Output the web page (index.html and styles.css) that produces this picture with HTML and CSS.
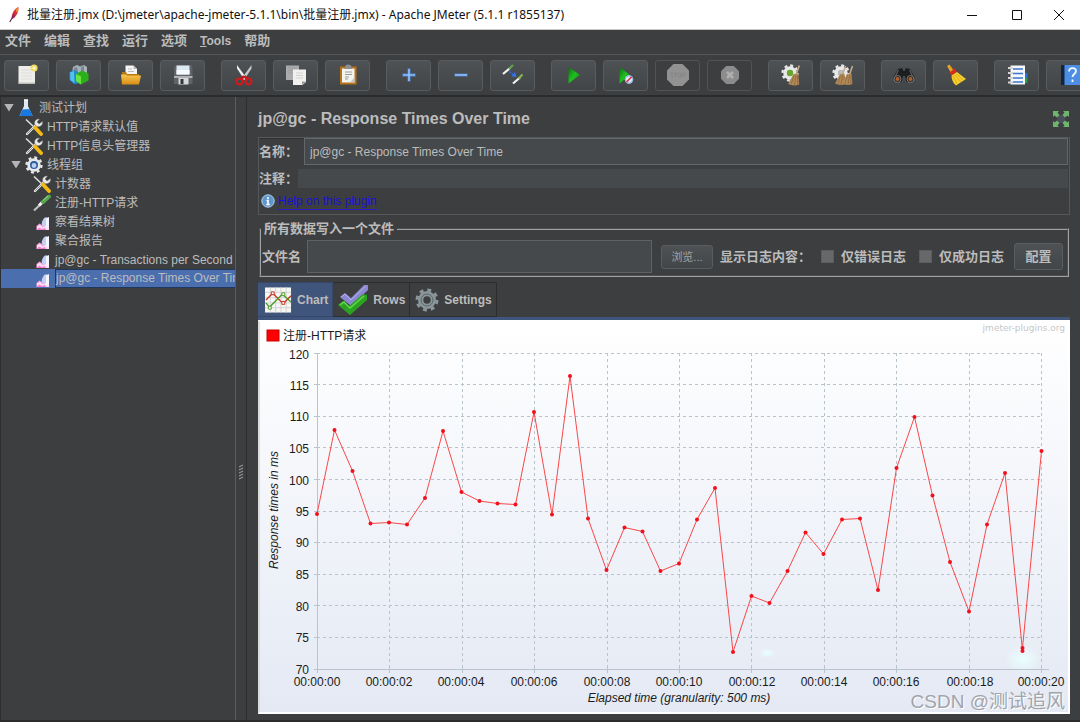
FILE: index.html
```
<!DOCTYPE html>
<html lang="zh-CN">
<head>
<meta charset="utf-8">
<title>批量注册.jmx - Apache JMeter</title>
<link rel="stylesheet" href="styles.css">
</head>
<body>
<svg class="defs" width="0" height="0" aria-hidden="true">
  <defs>
    <linearGradient id="gGreen" x1="0" y1="0" x2="1" y2="1"><stop offset="0" stop-color="#0c6a12"/><stop offset=".5" stop-color="#1fc01f"/><stop offset="1" stop-color="#0a7a10"/></linearGradient>
    <linearGradient id="gGold" x1="0" y1="0" x2="0" y2="1"><stop offset="0" stop-color="#f6c750"/><stop offset="1" stop-color="#d98d14"/></linearGradient>
    <symbol id="tools" viewBox="0 0 18 18">
      <path d="M2 16 11 7" stroke="#ececec" stroke-width="2.400" stroke-linecap="round"/>
      <path d="M2.200 15.800 11 7" stroke="#777" stroke-width=".8"/>
      <path d="M10 7c-1.500-3.500 1-6.500 4.500-6l-2.500 3 2 2 3.500-2.500c.8 3.500-2.500 6-5.500 5z" fill="#e8e8e8" stroke="#777" stroke-width=".5"/>
      <path d="M1 1.500 10 10" stroke="#ddd" stroke-width="1.600"/>
      <path d="M10 9.500 16 16" stroke="#f5b914" stroke-width="3.800" stroke-linecap="round"/>
    </symbol>
    <symbol id="listener" viewBox="0 0 18 18">
      <path d="M3.500 17v-4l3-2.500 3 2 2-1 4.500-.5v6z" fill="#fba3dd"/>
      <path d="M4 13.500 7 12l2.500 2.500 3-1.500 3.500 1v3H4z" fill="#ffe0f5"/>
      <path d="M3.500 17 6 14.500l3 1.500 3-1 1 2z" fill="#f47fce"/>
      <ellipse cx="12.200" cy="9" rx="3" ry="4.800" transform="rotate(24 12.200 9)" fill="#c3cff5"/>
      <path d="M13 14.500V5.500L16 4v10.500z" fill="#f3f5ff"/>
    </symbol>
    <symbol id="broom" viewBox="0 0 12 20">
      <path d="M10.500.5 7.500 9" stroke="#c4ab8b" stroke-width="1.600"/>
      <path d="M5 8.500 9.500 8l1 10.500C7 20 3 19.500 0 18z" fill="#b28958"/>
      <path d="M5.500 10 3 18M7.500 9.500 6 19M9 10v9" stroke="#86623a" stroke-width=".7"/>
    </symbol>
    <symbol id="cog" viewBox="0 0 20 20">
      <circle cx="10" cy="10" r="8.300" fill="none" stroke="currentColor" stroke-width="2.600" stroke-dasharray="3.260 3.260"/>
      <circle cx="10" cy="10" r="5.300" fill="none" stroke="currentColor" stroke-width="4.400"/>
    </symbol>
  </defs>
</svg>

<header class="titlebar">
  <svg class="feather" viewBox="0 0 12 18"><path d="M1.500 17 5 11" stroke="#59304f" stroke-width="1.200"/><path d="M3.500 13.500C3 9 6 3 10.500 1c.8 4-1 9-5.500 12.500z" fill="#d5303a"/><path d="M7.500 4.500c1-1.600 2-2.800 3-3.500.4 2-.1 4.500-1 6.500z" fill="#ef8a2c"/><path d="M3.800 13.500c0-2 .6-4 1.700-5.800l1.700 3.400z" fill="#84286a"/></svg>
  <h1 class="titlebar-text">批量注册.jmx (D:\jmeter\apache-jmeter-5.1.1\bin\批量注册.jmx) - Apache JMeter (5.1.1 r1855137)</h1>
  <div class="window-buttons">
    <button aria-label="Minimize"><svg viewBox="0 0 12 12"><path d="M1 6.500h10" stroke="#111"/></svg></button>
    <button aria-label="Maximize"><svg viewBox="0 0 12 12"><path d="M1.500 1.500h9v9h-9z" fill="none" stroke="#111"/></svg></button>
    <button aria-label="Close"><svg viewBox="0 0 12 12"><path d="m1 1 10 10M11 1 1 11" stroke="#111"/></svg></button>
  </div>
</header>

<nav class="menubar">
  <button>文件</button><button>编辑</button><button>查找</button><button>运行</button><button>选项</button><button class="latin"><u>T</u>ools</button><button>帮助</button>
</nav>

<div class="toolbar" role="toolbar">
  <div class="tool-group">
    <button aria-label="New"><svg viewBox="0 0 22 22"><path d="M2.500 2h16.500v17.500h-16.500z" fill="#ededea"/><path d="M2.500 18.500h16.500v1.500h-16.500z" fill="#bdbdb8"/><path d="M5 6h11M5 9h11M5 12h11M5 15h11" stroke="#dededb"/><circle cx="18" cy="4" r="3.600" fill="#f3dd67"/><circle cx="18" cy="4" r="1.500" fill="#fffbd0"/></svg></button>
    <button aria-label="Templates"><svg viewBox="0 0 22 22"><path d="m5 3 4-2 3 1.500L16 1l3 2v6H4z" fill="#a6b2ba"/><path d="m6 4 3-1 1 5H6zM13 3l3-1v6h-3z" fill="#7a8790"/><path d="m1.500 8 5-2 4 2.500v11L6 20l-4.500-4z" fill="#2089cf"/><path d="m2 8.500 4-1.500.500 12-4-3z" fill="#55c1f0"/><path d="m8 10 6-3.500 6.500 3v7L13 20.500l-5-3.500z" fill="#2dae1b"/><path d="m8 10 5 2.500v8l-5-3.500z" fill="#68e545"/></svg></button>
    <button aria-label="Open"><svg viewBox="0 0 22 22"><path d="M5.500 1.500h8L17 5v9H5.500z" fill="#f5f5f5"/><path d="M13.500 1.500V5H17z" fill="#b5b5b5"/><path d="M8 5h4M8 7.500h6" stroke="#bbb"/><path d="M2 8h4l1 2h12v10H2z" fill="#b87911"/><path d="M1 10.500h5l1 1h14L19 20.500H2z" fill="url(#gGold)"/></svg></button>
    <button aria-label="Save"><svg viewBox="0 0 22 22"><path d="M2 3.500 4 1h15l1.500 2.500V20H2z" fill="#5f6266"/><path d="M4.500 1.500h13v9h-13z" fill="#dceaf4"/><path d="M4.500 6h13v4.500h-13z" fill="#f7fafc"/><path d="M2 12h18.500v2H2z" fill="#aeb1b4"/><path d="M6.500 14h10v6.500h-10z" fill="#d8d8d8"/><path d="M8.500 15h3v5h-3z" fill="#34373a"/></svg></button>
  </div>
  <div class="tool-group">
    <button aria-label="Cut"><svg viewBox="0 0 22 22"><path d="m4 1 9.500 13-2 2L4 4.500z" fill="#eceef0"/><path d="m18.500 1-9.500 13 2 2 7.500-11.500z" fill="#c5cacd"/><path d="m11 12-3 3.500M11.500 12l3 3.500" stroke="#c81418" stroke-width="2.600"/><circle cx="6.500" cy="17.500" r="2.900" fill="none" stroke="#d5181c" stroke-width="2"/><circle cx="15.500" cy="17.500" r="2.900" fill="none" stroke="#d5181c" stroke-width="2"/></svg></button>
    <button aria-label="Copy"><svg viewBox="0 0 22 22"><path d="M1 1.500h13V16H1z" fill="#a9abad"/><path d="M3 4h9M3 6.500h9M3 9h9" stroke="#9a9c9e"/><path d="M8 5.500h13V18l-3.500 3H8z" fill="#f0f0ee"/><path d="M11 9h7M11 11.500h7M11 14h7" stroke="#d2d2d0"/><path d="M21 17.500h-4V21z" fill="#999"/></svg></button>
    <button aria-label="Paste"><svg viewBox="0 0 22 22"><path d="M3 2.500h16.500V20.500H3z" fill="#b87218"/><path d="M5 4.500h12.500V18.500H5z" fill="#f3f3ef"/><path d="M8 3.500c0-2 1-3 3.200-3s3.300 1 3.300 3l1 1.500H7z" fill="#8d8f90"/><path d="M8 8h7M8 10.500h7M8 13h4M8 15h3" stroke="#9b9b98"/><path d="m13 18.500 4.500-5v5z" fill="#c2c2bd"/></svg></button>
  </div>
  <div class="tool-group">
    <button aria-label="Expand all"><svg viewBox="0 0 22 22"><path d="M11 4.500v13M4.500 11h13" stroke="#4e8bdc" stroke-width="2.800"/><path d="M11 5v12M5 11h12" stroke="#a9ccfa" stroke-width="1.200"/></svg></button>
    <button aria-label="Collapse all"><svg viewBox="0 0 22 22"><path d="M4.500 11h13" stroke="#4e8bdc" stroke-width="2.800"/><path d="M5 11h12" stroke="#a9ccfa" stroke-width="1.200"/></svg></button>
    <button aria-label="Toggle"><svg viewBox="0 0 22 22"><path d="m1 10 7-6" stroke="#f2f2f2" stroke-width="2.200"/><path d="m7 5 4-4" stroke="#61a84a" stroke-width="2"/><path d="m11 19.500 7-6" stroke="#f2f2f2" stroke-width="2.200"/><path d="m16.500 14.500 4-4" stroke="#8db94c" stroke-width="2"/><path d="m7.500 7.500 4 3.500" stroke="#2c67d8" stroke-width="1.600" stroke-dasharray="2 1"/><path d="m9.500 12.500 5 .5-1.500-5z" fill="#3475e8"/></svg></button>
  </div>
  <div class="tool-group">
    <button aria-label="Start"><svg viewBox="0 0 22 22"><path d="M5.500 3 17 11 5.500 19.500z" fill="url(#gGreen)"/></svg></button>
    <button aria-label="Start no pauses"><svg viewBox="0 0 22 22"><path d="M4.500 3 15 11 4.500 19.500z" fill="url(#gGreen)"/><circle cx="14" cy="15.500" r="4.200" fill="#dfe9fb"/><circle cx="14" cy="15.500" r="3.700" fill="none" stroke="#8aa9df"/><path d="m11.500 18 5-5" stroke="#d43434" stroke-width="1.600"/></svg></button>
    <button class="disabled" disabled aria-label="Stop"><svg viewBox="0 0 22 22"><path d="M6.500 0h9L22 6.500v9L15.500 22h-9L0 15.500v-9z" fill="#929292"/><path d="M6 9H4v2h2v2H3.800M7 9h3M8.500 9v4M11 9h2.500v4H11zM15 13V9h3v2.500h-3" stroke="#868686" fill="none"/></svg></button>
    <button class="disabled" disabled aria-label="Shutdown"><svg viewBox="0 0 22 22"><path d="M7.200 2h7.600L20 7.200v7.600L14.800 20H7.200L2 14.800V7.200z" fill="#8c8c8c"/><path d="m8 8 6 6M14 8l-6 6" stroke="#b0b0b0" stroke-width="2.500"/></svg></button>
  </div>
  <div class="tool-group">
    <button aria-label="Clear"><svg class="pale" viewBox="0 0 22 22"><use href="#cog" x="1" y="0" width="18" height="18"/><circle cx="10" cy="9" r="3.200" fill="#67a72d"/><use href="#broom" x="8" y="1" width="13" height="21"/></svg></button>
    <button aria-label="Clear all"><svg class="pale" viewBox="0 0 22 22"><use href="#cog" x="0" y="0" width="18" height="18"/><circle cx="9" cy="9" r="3" fill="#b9bcbd"/><use href="#broom" x="3" y="1" width="12" height="21"/><use href="#broom" x="10" y="1" width="12" height="21"/></svg></button>
  </div>
  <div class="tool-group">
    <button aria-label="Search"><svg viewBox="0 0 22 22"><path d="m5 5 4-1 1.500 3h1L13 4l4 1 4.500 8-1 5h-7L12 12h-2l-1.500 6h-7l-1-5z" fill="#1d1e1f"/><path d="m5.500 6-3 6M16.500 6l3 6" stroke="#6b6d6e"/><circle cx="4.500" cy="15" r="3.500" fill="#2f2a28" stroke="#777"/><circle cx="17.500" cy="15" r="3.500" fill="#2f2a28" stroke="#777"/><circle cx="4.500" cy="15" r="2" fill="#b45f2c"/><circle cx="17.500" cy="15" r="2" fill="#b45f2c"/></svg></button>
    <button aria-label="Reset search"><svg viewBox="0 0 22 22"><path d="m2 2 2.500-1.500L9 7 6 9z" fill="#e4a327"/><path d="m4.500 8.500 5-4 2.500 3.500-5.500 3.500z" fill="#d42e1d"/><path d="m6.500 11.500 5.500-3.500 9 7-10 6.500C8 19 6.500 15.500 6.500 11.500z" fill="#f5cd2b"/><path d="m8 12 4 8M10 11l6 7M12 10l6 6" stroke="#d9a91a" stroke-width=".8"/></svg></button>
  </div>
  <div class="tool-group">
    <button aria-label="Function helper"><svg viewBox="0 0 22 22"><path d="M17 9h4.500v5H17z" fill="#2a75d6"/><path d="M17 14h4.500v5H17z" fill="#25a237"/><path d="M4.500 1.500h14.500v19H4.500z" fill="#f5f7fa"/><path d="M7 5h10M7 9.500h10M7 14h10M7 18h10" stroke="#3878cc" stroke-width="1.700"/><path d="M2 4h5M2 9h5M2 14h5M2 18.500h5" stroke="#d5d5d5" stroke-width="2"/></svg></button>
    <button aria-label="Help"><svg viewBox="0 0 22 22"><path d="M3 1h5v20H3z" fill="#13243f"/><path d="M6.500 1H22v20H6.500z" fill="#4c8ee3"/><path d="M11 7.500c0-4.500 7-4.500 7-.5 0 3-3.500 3-3.500 6M14.500 15.500V18" stroke="#f5f9ff" stroke-width="1.800" fill="none"/></svg></button>
  </div>
</div>

<main class="workspace">
  <ul class="tree">
    <li class="node level-0"><i class="arrow"></i><svg viewBox="0 0 18 18"><path d="M7 1h4v6l4.500 10h-13L7 7z" fill="#dce9f5"/><path d="m5.500 10.500 7-.5 3.200 7H2.500z" fill="#1878df"/><path d="M7 1h4" stroke="#fff" stroke-width="1.500"/></svg><span>测试计划</span></li>
    <li class="node level-1"><svg><use href="#tools"/></svg><span>HTTP请求默认值</span></li>
    <li class="node level-1"><svg><use href="#tools"/></svg><span>HTTP信息头管理器</span></li>
    <li class="node level-1 parent"><i class="arrow"></i><svg class="pale" viewBox="0 0 18 18"><use href="#cog" width="18" height="18"/><circle cx="9" cy="9" r="4" fill="#2e5c9b"/><circle cx="9" cy="9.500" r="2.400" fill="#b6d1f1"/></svg><span>线程组</span></li>
    <li class="node level-2"><svg><use href="#tools"/></svg><span>计数器</span></li>
    <li class="node level-2"><svg viewBox="0 0 18 18"><path d="M1 16.500 9 9" stroke="#bfc3c4" stroke-width="2.200"/><path d="m6 11.500 4-4" stroke="#f0f0f0" stroke-width="3"/><path d="m10 8 6-5.500" stroke="#57a64b" stroke-width="3.800" stroke-linecap="round"/><path d="m10 6.500 5-4.500" stroke="#a2d697"/></svg><span>注册-HTTP请求</span></li>
    <li class="node level-2"><svg><use href="#listener"/></svg><span>察看结果树</span></li>
    <li class="node level-2"><svg><use href="#listener"/></svg><span>聚合报告</span></li>
    <li class="node level-2"><svg><use href="#listener"/></svg><span>jp@gc - Transactions per Second</span></li>
    <li class="node level-2 selected"><svg><use href="#listener"/></svg><span>jp@gc - Response Times Over Time</span></li>
  </ul>
  <div class="divider"><svg viewBox="0 0 6 16"><path d="m1 3 4-2M1 6l4-2M1 9l4-2M1 12l4-2M1 15l4-2" stroke="#a4a6a7"/></svg></div>

  <section class="editor">
    <div class="editor-head">
      <h2>jp@gc - Response Times Over Time</h2>
      <button class="expand" aria-label="Maximize panel"><svg viewBox="0 0 16 16"><path d="M4 4h8v8H4z" fill="#4b4f5d"/><path d="M0 0h6L4.500 1.500 6.500 4 4 6.500 1.500 4.500 0 6zM16 0h-6l1.500 1.500L9.500 4 12 6.500l2.500-2L16 6zM0 16h6l-1.500-1.500 2-2.500L4 9.500l-2.500 2L0 10zM16 16h-6l1.500-1.500-2-2.500L12 9.500l2.500 2L16 10z" fill="#6fb56d"/></svg></button>
    </div>
    <div class="info">
      <div class="field"><label for="name">名称：</label><input id="name" type="text" value="jp@gc - Response Times Over Time"></div>
      <div class="field comment"><label for="comment">注释：</label><input id="comment" type="text"></div>
      <div class="help"><svg viewBox="0 0 14 14"><circle cx="7" cy="7" r="6.200" fill="#5f97cc" stroke="#b6d4ee"/><path d="M7 3v2M5.500 6.500H7V10M5.300 10.500h3.500" stroke="#fff" stroke-width="1.600" fill="none"/></svg><a href="#help">Help on this plugin</a></div>
    </div>
    <fieldset class="file-box">
      <legend>所有数据写入一个文件</legend>
      <div class="file-row">
        <label for="file">文件名</label>
        <input id="file" type="text">
        <button class="browse">浏览...</button>
        <span class="log-label">显示日志内容：</span>
        <label class="check"><input type="checkbox">仅错误日志</label>
        <label class="check"><input type="checkbox">仅成功日志</label>
        <button class="config">配置</button>
      </div>
    </fieldset>
    <div class="tabs" role="tablist">
      <button role="tab" aria-selected="true"><svg viewBox="0 0 28 28"><path d="M0 1h27v26H0z" fill="#f6f6f4"/><path d="M5.500 1v26M11 1v26M16.500 1v26M22 1v26M0 6h27M0 11.500h27M0 17h27M0 22h27" stroke="#d3d3d0"/><path d="m1 14 7-7 9 9 3 .5 7-7" fill="none" stroke="#c63422" stroke-width="1.400"/><path d="m4 22 14-14 9 8" fill="none" stroke="#4c9c28" stroke-width="1.400"/><path d="m1 17 4 5" stroke="#4c9c28" stroke-width="1.400"/><path d="M6.500 5.500h3v3h-3zM17.500 15.500h3v3h-3z" fill="#fff" stroke="#c63422"/><path d="M3.500 20.500h3v3h-3zM17.500 6.500h3v3h-3z" fill="#fff" stroke="#4c9c28"/></svg>Chart</button>
      <button role="tab" aria-selected="false"><svg class="wide" viewBox="0 0 30 30"><path d="m2 12 5-4 6 5L26 0h4v5L13 21z" fill="#8b88cf"/><path d="m3 12 4-3 6 6L28 1" stroke="#b3b0ea" fill="none"/><path d="m0 20 5-4 6 5L25 9l4 1v5L12 30z" fill="#2ca221"/><path d="m2 20 4-3 6 6 14-12" stroke="#63da4d" fill="none" stroke-width="1.500"/></svg>Rows</button>
      <button role="tab" aria-selected="false"><svg class="gear" viewBox="0 0 24 24"><use href="#cog" width="24" height="24"/><circle cx="12" cy="12" r="6" fill="none" stroke="#59666a"/></svg>Settings</button>
    </div>
    <div class="chart-panel">
      <svg class="chart" viewBox="0 0 808 390" role="img" aria-label="Response times over elapsed time">
        <defs><radialGradient id="glow"><stop offset="0" stop-color="#e8ffff"/><stop offset="1" stop-color="#e8ffff" stop-opacity="0"/></radialGradient></defs>
        <rect x="7" y="8" width="12" height="11" fill="red" stroke="#c80000"/>
        <text x="23" y="18" class="legend-text">注册-HTTP请求</text>
        <text x="805" y="9" class="brand">jmeter-plugins.org</text>
        <g transform="translate(57 31)">
          <ellipse cx="706" cy="306" rx="18" ry="14" fill="url(#glow)"/>
          <ellipse cx="450" cy="300" rx="9" ry="5" fill="url(#glow)"/>
          <path class="grid" d="M0 .5h725M0 31.500h725M0 63.500h725M0 94.500h725M0 126.500h725M0 158.500h725M0 189.500h725M0 221.500h725M0 252.500h725M0 284.500h725M72.500 0v316M145.500 0v316M217.500 0v316M290.500 0v316M362.500 0v316M434.500 0v316M507.500 0v316M579.500 0v316M652.500 0v316M724.500 0v316"/>
          <path class="axis" d="M.5 0v320M-3 316.500h735M-3 .5h6M-3 31.500h6M-3 63.500h6M-3 94.500h6M-3 126.500h6M-3 158.500h6M-3 189.500h6M-3 221.500h6M-3 252.500h6M-3 284.500h6M72.500 313v7M145.500 313v7M217.500 313v7M290.500 313v7M362.500 313v7M434.500 313v7M507.500 313v7M579.500 313v7M652.500 313v7M724.500 313v7"/>
          <g class="y-labels"><text x="-8" y="6">120</text><text x="-8" y="37">115</text><text x="-8" y="68">110</text><text x="-8" y="100">105</text><text x="-8" y="132">100</text><text x="-8" y="163">95</text><text x="-8" y="194">90</text><text x="-8" y="226">85</text><text x="-8" y="258">80</text><text x="-8" y="289">75</text><text x="-8" y="321">70</text></g>
          <g class="x-labels"><text x="0" y="333">00:00:00</text><text x="72" y="333">00:00:02</text><text x="144" y="333">00:00:04</text><text x="217" y="333">00:00:06</text><text x="290" y="333">00:00:08</text><text x="362" y="333">00:00:10</text><text x="435" y="333">00:00:12</text><text x="507" y="333">00:00:14</text><text x="579" y="333">00:00:16</text><text x="653" y="333">00:00:18</text><text x="724" y="333">00:00:20</text><text class="axis-title" x="362" y="349">Elapsed time (granularity: 500 ms)</text></g>
          <text class="axis-title" transform="translate(-39 157) rotate(-90)">Response times in ms</text>
          <polyline class="series" points="0,161 17.500,77 35.500,118 53.500,170.500 72,169.500 90,171.500 108,145 126,78 144.500,139 162.500,148 180.500,150.500 198.500,151.500 217,59 235,161.500 253,23 271,165.500 289.500,217 307.500,174.500 325.500,178.500 343.500,218 362,210.500 380,166.500 398,135 416,299 434.500,243 452.500,250 470.500,218 488.500,179.500 506.500,201 525,166.500 543,165.500 561,237 579.500,115 597.500,64 615.500,142.500 633,209 652,258.500 670,171.500 688,120 705.500,298 705.500,295 724.500,98"/>
        </g>
      </svg>
      <span class="watermark">CSDN @测试追风</span>
    </div>
  </section>
</main>
<script src="chart.js"></script>
</body>
</html>
```
FILE: chart.js
```
// Puts a round marker on every vertex of the series line.
const line = document.querySelector('.series');
const svgNs = 'http://www.w3.org/2000/svg';
for (const point of line.points) {
  const dot = document.createElementNS(svgNs, 'circle');
  dot.setAttribute('cx', point.x);
  dot.setAttribute('cy', point.y);
  dot.setAttribute('r', 2);
  dot.setAttribute('class', 'marker');
  line.parentNode.append(dot);
}
```
FILE: styles.css
```
* { box-sizing: border-box; }
body {
  margin: 0;
  min-height: 100vh;
  display: flex;
  flex-direction: column;
  background: #3c3e40;
  color: #bcbcbc;
  font: 12px/18px "Liberation Sans", "Noto Sans CJK SC", sans-serif;
  overflow-x: hidden;
}
button, input { font: inherit; color: inherit; margin: 0; padding: 0; border: 0; background: none; }
h1, h2, ul { margin: 0; padding: 0; }
.defs { position: absolute; }

.titlebar { height: 30px; display: flex; align-items: center; padding-left: 8px; background: #fff; border-bottom: 1px solid #c9c9c9; color: #111; }
.feather { width: 12px; height: 17px; margin-right: 7px; }
.titlebar-text { flex: 1; font: 12px/20px "Noto Sans", "Noto Sans CJK SC", sans-serif; white-space: nowrap; }
.window-buttons { display: flex; padding-right: 1px; }
.window-buttons button { width: 45px; height: 29px; display: grid; place-items: center; }
.window-buttons button:last-child { width: 40px; }
.window-buttons svg { width: 12px; height: 12px; }

.menubar { height: 25px; display: flex; gap: 13px; padding: 0 5px; border-bottom: 1px solid #54575a; font-size: 13px; font-weight: bold; }
.menubar button { height: 22px; }
.menubar .latin { font-size: 12px; }

.toolbar { height: 42px; display: flex; align-items: center; gap: 16px; padding-left: 4px; border-bottom: 2px solid #292b2d; overflow: hidden; }
.tool-group { display: flex; gap: 7px; flex: none; }
.tool-group button { width: 45px; height: 31px; display: grid; place-items: center; border: 1px solid #585c5e; border-radius: 3px; background: linear-gradient(#4e5254, #414547); }
.tool-group .disabled { background: none; border-color: #515456; }
.tool-group svg { width: 22px; height: 22px; }
.pale { color: #e6e8e9; }

.workspace { flex: 1; display: flex; border-bottom: 2px solid #2c2d2f; }
.tree { width: 236px; flex: none; list-style: none; overflow: hidden; padding-top: 1px; border-left: 1px solid #2d2f31; border-right: 1px solid #5c5f61; }
.node { height: 19px; display: flex; align-items: center; white-space: nowrap; }
.node svg { width: 18px; height: 18px; flex: none; }
.node span { margin-left: 4px; flex: 1; }
.level-0 { padding-left: 3px; }
.level-0 svg { margin-left: 3px; }
.level-1 { padding-left: 24px; }
.level-1.parent { padding-left: 10px; }
.parent svg { margin-left: 4px; }
.level-2 { padding-left: 32px; }
.arrow { width: 10px; height: 8px; background: #b3b5b6; clip-path: polygon(0 0, 100% 0, 50% 100%); }
.selected { background: #4b6eaf; }
.selected span { border: 1px solid #20375e; border-right: 0; line-height: 17px; }
.divider { width: 11px; flex: none; display: grid; place-items: center; border-right: 1px solid #2b2d2f; padding-top: 126px; }
.divider svg { width: 6px; height: 16px; }

.editor { flex: 1; min-width: 0; display: flex; flex-direction: column; padding: 0 10px 6px 11px; }
.editor-head { height: 40px; display: flex; align-items: center; justify-content: space-between; padding-top: 4px; }
h2 { font-size: 16px; line-height: 20px; }
.expand { width: 18px; height: 16px; }
.expand svg { width: 16px; height: 16px; }

.info { border: 1px solid #56595b; box-shadow: inset 0 1px #2e3032; }
.field { display: flex; align-items: center; gap: 6px; font-size: 13px; font-weight: bold; padding: 0 1px 0 0; }
.field label { width: 39px; white-space: nowrap; }
.field input { flex: 1; min-width: 0; height: 27px; padding: 0 5px; background: #46494b; border: 1px solid #646769; font-size: 12px; font-weight: normal; }
.comment { gap: 0; padding-top: 4px; }
.comment input { height: 19px; border: 0; }
.help { display: flex; align-items: center; gap: 3px; height: 26px; padding-left: 2px; }
.help svg { width: 14px; height: 14px; }
.help a { color: #1a11d8; line-height: 16px; text-decoration: none; border-bottom: 1px solid #2820c0; }

.file-box { margin: 5px 1px 0; padding: 0; min-width: 0; border: 2px groove #a0a2a4; }
.file-box legend { margin-left: 0; padding: 0 3px; }
.file-box { font-size: 13px; font-weight: bold; }
.file-row { display: flex; align-items: center; padding: 2px 4px 2px 1px; white-space: nowrap; }
#file { flex: 1; min-width: 0; height: 33px; margin-left: 6px; background: #46494b; border: 1px solid #5f6264; }
.browse, .config { border: 1px solid #5a5d5f; border-radius: 3px; background: linear-gradient(#4e5254, #424648); }
.browse { width: 52px; height: 24px; margin: 0 7px 0 9px; font-size: 11px; font-weight: normal; color: #a2a4a5; }
.log-label { width: 101px; }
.check { display: flex; align-items: center; gap: 7px; margin-right: 13px; }
.check input { appearance: none; width: 13px; height: 13px; background: #66686a; border: 1px solid #5a5c5d; }
.config { width: 49px; height: 27px; margin-left: -3px; }

.tabs { display: flex; align-items: flex-start; margin-top: 5px; border-bottom: 3px solid #40557b; font-size: 12px; font-weight: bold; }
.tabs button { height: 35px; display: flex; align-items: center; gap: 5px; padding: 0 4px 0 5px; border: 1px solid #2b2d2f; border-left-width: 0; }
.tabs [aria-selected="true"] { background: #40557b; border-color: #35486b; padding-left: 7px; }
.tabs svg { width: 27px; height: 28px; }
.tabs .wide { width: 30px; height: 30px; }
.tabs .gear { width: 24px; height: 24px; color: #8a9699; }

.chart-panel { flex: 1; position: relative; border: 2px solid #fff; border-left-color: #ddd; background: linear-gradient(#fff, #e4e9f4); }
.chart { display: block; width: 100%; height: auto; font-size: 12px; fill: #1b1b1b; }
.brand { font: 9px "DejaVu Sans", sans-serif; text-anchor: end; fill: #c5c7ca; }
.grid { fill: none; stroke: #b8c4ca; stroke-dasharray: 3 3; }
.axis { fill: none; stroke: #b9c5cd; }
.y-labels { text-anchor: end; }
.x-labels, .axis-title { text-anchor: middle; }
.axis-title { font-style: italic; }
.series { fill: none; stroke: #f84848; stroke-width: 1; }
.marker { fill: #f2101c; }
.watermark { position: absolute; right: 3px; bottom: -4px; font-size: 19px; line-height: 28px; color: #a0a4ab; text-shadow: 1px 1px #fff; }
```
